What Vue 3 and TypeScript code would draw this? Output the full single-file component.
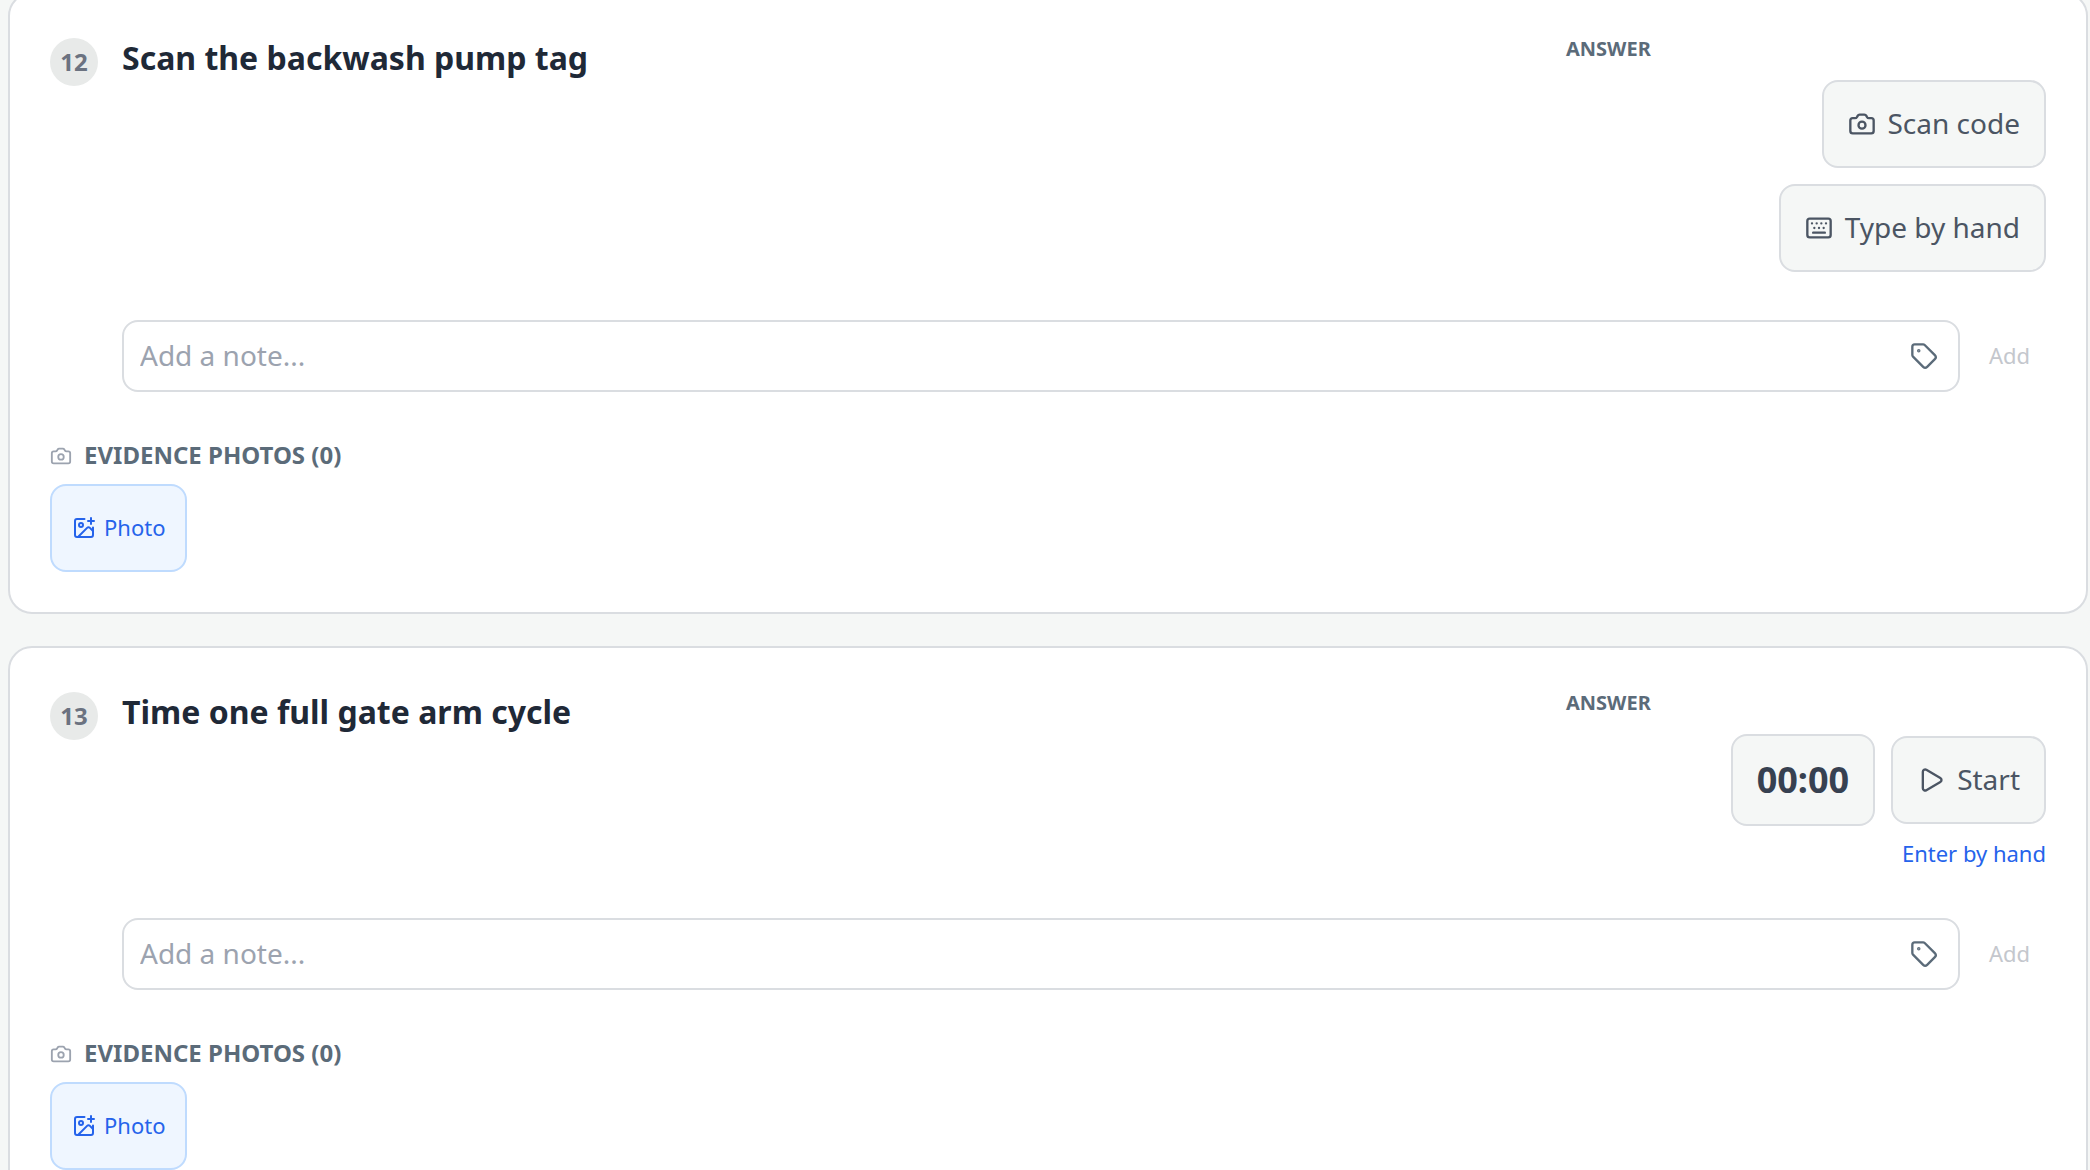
<script setup lang="ts">
import { reactive } from 'vue'

interface Item {
  id: number
  title: string
  kind: 'scan' | 'timer'
  note: string
  photos: number
}

const items = reactive<Item[]>([
  { id: 12, title: 'Scan the backwash pump tag', kind: 'scan', note: '', photos: 0 },
  { id: 13, title: 'Time one full gate arm cycle', kind: 'timer', note: '', photos: 0 },
])

const cameraBody =
  'M13.997 4a2 2 0 0 1 1.76 1.05l.486.9A2 2 0 0 0 18.003 7H20a2 2 0 0 1 2 2v9a2 2 0 0 1-2 2H4a2 2 0 0 1-2-2V9a2 2 0 0 1 2-2h1.997a2 2 0 0 0 1.759-1.048l.489-.904A2 2 0 0 1 10.004 4z'
</script>

<template>
  <main class="page">
    <section v-for="item in items" :key="item.id" class="card">
      <div class="top">
        <span class="badge">{{ item.id }}</span>
        <h2 class="title">{{ item.title }}</h2>
        <div class="answer">
          <h3 class="label">ANSWER</h3>
          <div v-if="item.kind === 'scan'" class="stack">
            <button type="button" class="btn">
              <svg class="icon" viewBox="0 0 24 24" aria-hidden="true">
                <path :d="cameraBody" />
                <circle cx="12" cy="13" r="3" />
              </svg>
              <span class="caption">Scan code</span>
            </button>
            <button type="button" class="btn">
              <svg class="icon" viewBox="0 0 24 24" aria-hidden="true">
                <path d="M10 8h.01M12 12h.01M14 8h.01M16 12h.01M18 8h.01M6 8h.01M7 16h10M8 12h.01" />
                <rect x="2" y="4" width="20" height="16" rx="2" />
              </svg>
              <span class="caption">Type by hand</span>
            </button>
          </div>
          <div v-else class="timer">
            <div class="row">
              <output class="clock">00:00</output>
              <button type="button" class="btn">
                <svg class="icon" viewBox="0 0 24 24" aria-hidden="true">
                  <path d="M5 5a2 2 0 0 1 3.008-1.728l11.997 6.998a2 2 0 0 1 .003 3.458l-12 7A2 2 0 0 1 5 19z" />
                </svg>
                <span class="caption">Start</span>
              </button>
            </div>
            <button type="button" class="text-btn">
              <span class="caption">Enter by hand</span>
            </button>
          </div>
        </div>
      </div>

      <div class="note">
        <div class="field">
          <input v-model="item.note" type="text" placeholder="Add a note..." :aria-label="`Note for item ${item.id}`" />
          <button type="button" class="tag" aria-label="Tag">
            <svg class="icon" viewBox="0 0 24 24" aria-hidden="true">
              <path d="M12.586 2.586A2 2 0 0 0 11.172 2H4a2 2 0 0 0-2 2v7.172a2 2 0 0 0 .586 1.414l8.704 8.704a2.426 2.426 0 0 0 3.42 0l6.58-6.58a2.426 2.426 0 0 0 0-3.42z" />
              <circle cx="7.5" cy="7.5" r=".5" fill="currentColor" />
            </svg>
          </button>
        </div>
        <button type="button" class="add" disabled>
          <span class="caption">Add</span>
        </button>
      </div>

      <h3 class="evidence">
        <svg class="icon small" viewBox="0 0 24 24" aria-hidden="true">
          <path :d="cameraBody" />
          <circle cx="12" cy="13" r="3" />
        </svg>
        <span class="caption">EVIDENCE PHOTOS ({{ item.photos }})</span>
      </h3>
      <button type="button" class="photo">
        <svg class="icon medium" viewBox="0 0 24 24" aria-hidden="true">
          <path d="M16 5h6M19 2v6M21 11.5V19a2 2 0 0 1-2 2H5a2 2 0 0 1-2-2V5a2 2 0 0 1 2-2h7.5" />
          <path d="m21 15-3.086-3.086a2 2 0 0 0-2.828 0L6 21" />
          <circle cx="9" cy="9" r="2" />
        </svg>
        <span class="caption">Photo</span>
      </button>
    </section>
  </main>
</template>

<style>
body {
  background: #f5f7f6;
}
</style>

<style scoped>
.page {
  box-sizing: border-box;
  display: flex;
  flex-direction: column;
  gap: 32px;
  height: 100vh;
  padding: 0 2px 0 8px;
  overflow: hidden;
  font-family: 'Noto Sans', sans-serif;
}

.card {
  flex: none;
  padding: 40px;
  border: 2px solid #dadde1;
  border-radius: 24px;
  background: #fff;
}

.card:first-child {
  margin-top: -8px;
}

.top {
  display: flex;
  align-items: flex-start;
  gap: 24px;
}

.badge {
  box-sizing: border-box;
  display: flex;
  align-items: center;
  justify-content: center;
  width: 48px;
  height: 48px;
  margin-top: 4px;
  padding-bottom: 2px;
  border-radius: 50%;
  background: #e8eae9;
  color: #6b7280;
  font-size: 24px;
  font-weight: 700;
}

.title {
  flex: 1;
  margin: 0;
  color: #1f2937;
  font-size: 32px;
  font-weight: 700;
  line-height: 48px;
}

.answer {
  width: 480px;
}

.label {
  margin: 0 0 16px;
  color: #5b6b79;
  font-size: 20px;
  font-weight: 700;
  line-height: 30px;
}

.stack,
.timer {
  display: flex;
  flex-direction: column;
  align-items: flex-end;
  gap: 16px;
}

.timer {
  gap: 12px;
}

.row {
  display: flex;
  align-items: center;
  gap: 16px;
}

button {
  font-family: inherit;
}

.caption {
  display: block;
  padding-bottom: 2px;
}

.btn {
  display: flex;
  align-items: center;
  gap: 12px;
  height: 88px;
  padding: 0 24px;
  border: 2px solid #dadde1;
  border-radius: 16px;
  background: #f5f7f6;
  color: #4b5563;
  font-size: 28px;
}

.clock {
  padding: 20px 24px;
  border: 2px solid #dadde1;
  border-radius: 16px;
  background: #f5f7f6;
  color: #374151;
  font-size: 36px;
  font-weight: 700;
  line-height: 48px;
}

.text-btn {
  padding: 0;
  border: 0;
  background: none;
  color: #2563eb;
  font-size: 22px;
  line-height: 30px;
}

.icon {
  flex: none;
  width: 28px;
  height: 28px;
  fill: none;
  stroke: currentColor;
  stroke-width: 2;
  stroke-linecap: round;
  stroke-linejoin: round;
}

.small {
  width: 22px;
  height: 22px;
  color: #9ca3af;
}

.medium {
  width: 24px;
  height: 24px;
}

.note {
  display: flex;
  gap: 13px;
  margin: 48px 0 0 72px;
}

.field {
  box-sizing: border-box;
  display: flex;
  flex: 1;
  align-items: center;
  height: 72px;
  padding: 0 8px 0 16px;
  border: 2px solid #dadde1;
  border-radius: 16px;
}

.field input {
  flex: 1;
  min-width: 0;
  padding: 0 0 2px;
  border: 0;
  outline: 0;
  background: none;
  color: #1f2937;
  font: inherit;
  font-size: 28px;
}

.field input::placeholder {
  color: #9ca3af;
  opacity: 1;
}

.tag {
  display: flex;
  padding: 12px;
  border: 0;
  background: none;
  color: #5b6b79;
}

.add {
  padding: 0 16px;
  border: 0;
  background: none;
  color: #c4c7cd;
  font-size: 22px;
}

.evidence {
  display: flex;
  align-items: center;
  gap: 12px;
  margin: 48px 0 12px;
  color: #5b6b79;
  font-size: 24px;
  font-weight: 700;
  line-height: 30px;
}

.photo {
  display: flex;
  align-items: center;
  gap: 8px;
  height: 88px;
  padding: 0 20px;
  border: 2px solid #bfdbfe;
  border-radius: 16px;
  background: #eff6ff;
  color: #2563eb;
  font-size: 22px;
}
</style>
